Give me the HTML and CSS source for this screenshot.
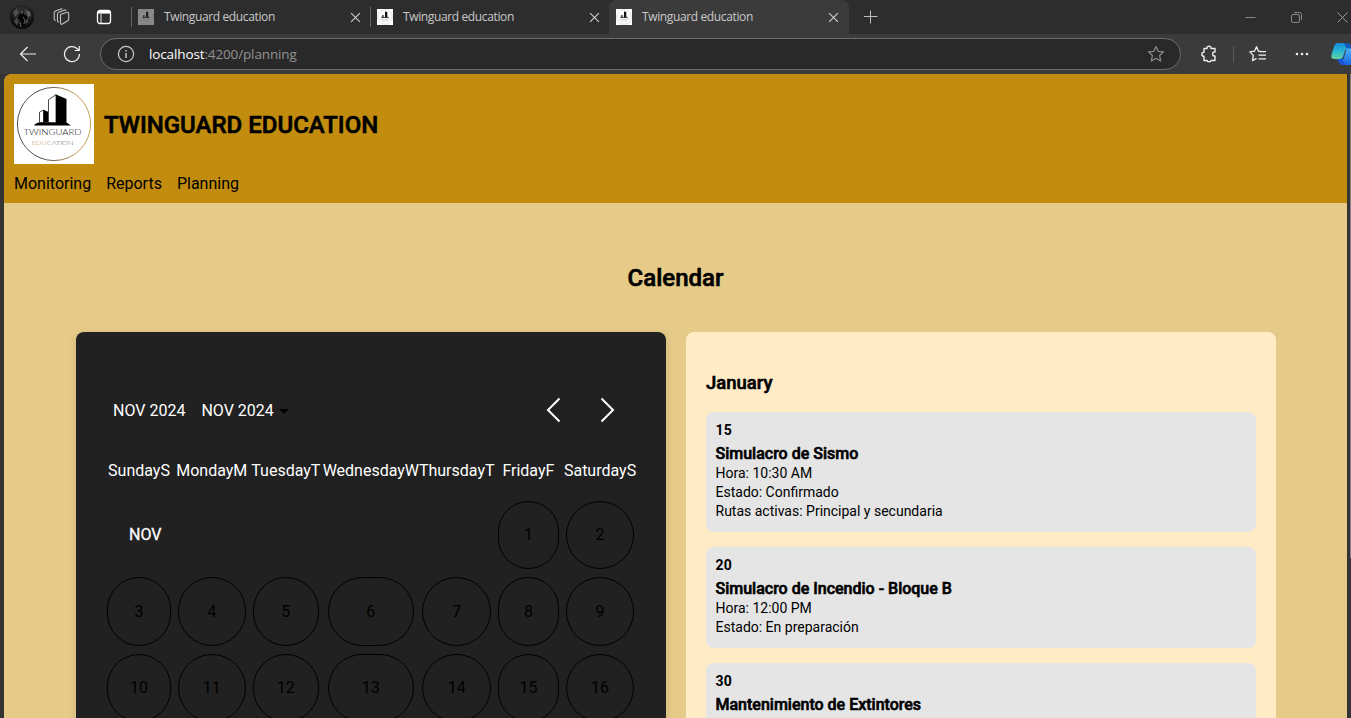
FILE: index.html
```html
<!DOCTYPE html>
<html lang="en">
<head>
<meta charset="utf-8">
<title>Twinguard education</title>
<link rel="stylesheet" href="styles.css">
</head>
<body>
<svg class="defs" width="0" height="0">
  <defs>
    <symbol id="favicon" viewBox="0 0 16 16">
      <rect width="16" height="16" fill="#fff"/>
      <circle cx="8" cy="8" r="7.3" fill="none" stroke="#ccc" stroke-width=".6"/>
      <path d="M4.200 8.400h7.600" stroke="#333" stroke-width=".9"/>
      <path d="M5.900 8.500V6M8.600 8.500V2.500M9.700 8.500V3" stroke="#111" stroke-width="1.200"/>
      <path d="M3 10.200h10M5 12h6" stroke="#bbb" stroke-width=".7"/>
    </symbol>
    <symbol id="close" viewBox="0 0 10 10"><path d="M1 1l8 8M9 1L1 9" fill="none" stroke="currentColor" stroke-width="1.1"/></symbol>
    <linearGradient id="gold" x1="0" x2="1"><stop offset=".35" stop-color="#222"/><stop offset=".8" stop-color="#b8862b"/></linearGradient>
    <linearGradient id="edu" x1="0" x2="1"><stop offset=".3" stop-color="#c49a4a"/><stop offset=".65" stop-color="#555"/></linearGradient>
    <linearGradient id="pilotA" x1="0" y1="0" x2="0" y2="1"><stop offset="0" stop-color="#1687d8"/><stop offset=".5" stop-color="#25b7d2"/><stop offset="1" stop-color="#64d39a"/></linearGradient>
    <linearGradient id="pilotB" x1="0" y1="0" x2="0" y2="1"><stop offset="0" stop-color="#4cb4fa"/><stop offset="1" stop-color="#1763e0"/></linearGradient>
    <radialGradient id="face" cx=".5" cy=".35" r=".6"><stop offset="0" stop-color="#444"/><stop offset="1" stop-color="#090909"/></radialGradient>
  </defs>
</svg>
<div class="window">
  <div class="tabstrip">
    <div class="tools">
      <svg width="24" height="24" viewBox="0 0 24 24"><circle cx="12" cy="12" r="12" fill="url(#face)"/><path d="M3 7l4-4 1 5-3 4zM4 16l3-3 1 4-1 4z" fill="#777" opacity=".5"/><path d="M16 5l4 2 1 4-3 1zM16 13l2 1-1 5-1-2z" fill="#999" opacity=".5"/><path d="M10.500 5l2-1 1.500 2-.5 3 3.500 2v4l-2 1-.5 5h-4l-.5-6-2-2 .5-3 2-1.500z" fill="#050505"/><path d="M11 6l1.500-.5.5 1.500-1 1.500zM13 12l2 3-1 4M10 17l1 5" stroke="#888" stroke-width=".7" fill="none"/></svg>
      <svg class="workspaces" width="18" height="18" viewBox="0 0 18 18" fill="none" stroke="#c4c4c4" stroke-width="1.100" stroke-linejoin="round"><path d="M7.500 6.500L14 4.300q1.500-.4 1.700 1v6q0 1-1 1.500L9 16.200q-1.500.4-1.500-1z"/><path d="M13 2.800q-.4-1-1.500-.7L6 4.200Q4.500 4.800 4.500 6v7q0 1 1.500 1.200M9.500 1.200q-.5-.5-1.500-.2L2.500 3Q1.200 3.700 1.200 5v6q0 1.400 1.500 1.500"/></svg>
      <svg class="tabmenu" width="16" height="16" viewBox="0 0 16 16" fill="none" stroke="#fff" stroke-width="1.300"><rect x="1.500" y="1.500" width="13" height="13" rx="2.500"/><path d="M1.500 3.300h13" stroke-width="2.600"/><path d="M5 5v9.500" stroke-width=".9"/></svg>
    </div>
    <div class="tab tab-muted"><svg class="fav" width="16" height="16"><use href="#favicon"/></svg><span>Twinguard education</span><svg class="x" width="11" height="11"><use href="#close"/></svg></div>
    <div class="tab"><svg class="fav" width="16" height="16"><use href="#favicon"/></svg><span>Twinguard education</span><svg class="x" width="11" height="11"><use href="#close"/></svg></div>
    <div class="tab tab-active"><svg class="fav" width="16" height="16"><use href="#favicon"/></svg><span>Twinguard education</span><svg class="x" width="11" height="11"><use href="#close"/></svg></div>
    <svg class="plus" width="14" height="14" viewBox="0 0 14 14"><path d="M6.500 .5v13M0 6.500h13.500" stroke="#c0c0c0"/></svg>
    <div class="winbtns">
      <svg width="11" height="11" viewBox="0 0 11 11"><path d="M.5 5.500h10" stroke="#888"/></svg>
      <svg width="11" height="11" viewBox="0 0 11 11" fill="none" stroke="#888"><rect x=".5" y="2.500" width="8" height="8" rx="1.500"/><path d="M3 .5h5.500q2 0 2 2V8"/></svg>
      <svg width="11" height="11" viewBox="0 0 11 11"><path d="M.5.500l10 10M10.500.500l-10 10" stroke="#999"/></svg>
    </div>
  </div>
  <div class="toolbar">
    <svg class="back" width="18" height="16" viewBox="0 0 18 16" fill="none" stroke="#eee" stroke-width="1.200"><path d="M8.500 1L1.500 8l7 7M1.500 8H17"/></svg>
    <svg class="reload" width="18" height="18" viewBox="0 0 18 18" fill="none" stroke="#eee" stroke-width="1.200"><path d="M16.500 9A7.500 7.500 0 1 1 14 3.500L16 5.300M16.300 1v4.500h-4.500"/></svg>
    <div class="address">
      <svg width="18" height="18" viewBox="0 0 18 18" fill="none" stroke="#ccc" stroke-width="1.200"><circle cx="9" cy="9" r="7.600"/><path d="M9 8v5M9 5v1.500" stroke-width="1.400"/></svg>
      <span class="url"><b>localhost</b>:4200/planning</span>
      <svg class="star" width="18" height="18" viewBox="0 0 18 18" fill="none" stroke="#8c8c8c" stroke-width="1.200" stroke-linejoin="round"><path d="M9 1.500l2.200 4.800 5.300.6-3.900 3.600 1.100 5.500L9 13.300 4.300 16l1.100-5.500L1.500 6.900l5.300-.6z"/></svg>
    </div>
    <svg class="ext" width="16" height="18" viewBox="0 0 16 18" fill="none" stroke="#eee" stroke-width="1.400" stroke-linejoin="round"><path d="M3 3.500h3q-.2-2.300 2-2.300t2 2.300h4V7q-2.400-.2-2.400 2T14 11v4.500h-4q0 1.300-2 1.300t-2-1.300H3V11.300Q.8 11.300.8 9.200T3 7.200z"/></svg>
    <i class="sep"></i>
    <svg class="favs" width="18" height="18" viewBox="0 0 18 18" fill="none" stroke="#eee" stroke-width="1.300" stroke-linejoin="round"><path d="M11.500 6.500l-2.200-.4L7.500 1.700 5.500 6.200l-4.700.7 3.500 3.500-.8 5.300 4-2.300M11 6.600h6M9.500 10.200H17M9.500 13.800H17"/></svg>
    <svg class="more" width="14" height="4" viewBox="0 0 14 4" fill="#eee"><circle cx="2" cy="2" r="1.300"/><circle cx="7" cy="2" r="1.300"/><circle cx="12" cy="2" r="1.300"/></svg>
    <svg class="copilot" width="20" height="24" viewBox="0 0 20 24"><path d="M7 1h10q2 0 2.500 2l1 4h-4q-2 0-2.500 2l-2 6q-.5 2-2.500 2H3Q-.5 17 .5 12.500l2.500-8Q4 1 7 1z" fill="url(#pilotA)"/><path d="M13 1h4q2 0 2.500 2l1 4h-4.500q-1.500-3-3-6z" fill="#1458b8"/><path d="M6 17h3q2 0 2.500-2l2-7q.5-1.500 2.500-1.500h4V23h-8q-2 0-3-1.500z" fill="url(#pilotB)"/><path d="M6 17h3q1.500 0 2.200-1l2.800 7h-2q-2.500 0-3.200-2z" fill="#1a54d6"/><path d="M14.200 8l-2 7q-.5 1.500-1.500 2l2-.3 2.800-9.700z" fill="#3b3b3b"/></svg>
  </div>
  <div class="viewport">
    <div class="page">
      <header class="header">
        <div class="brand">
          <svg width="80" height="80" viewBox="0 0 80 80"><rect width="80" height="80" fill="#fff"/><circle cx="40" cy="40" r="36.600" fill="none" stroke="url(#gold)" stroke-width=".8"/>
            <path d="M41.500 10.200l11 4.800v23.500l4.500 3H20q1.500-2.500 6-3.200h15.500z" fill="#000"/><path d="M34.500 38.500V15.700l7.500-5v28z" fill="#fff" stroke="#000" stroke-width=".7"/><path d="M25.500 38.500V28.200l4-2.200v12.500z" fill="#fff" stroke="#000" stroke-width=".7"/><path d="M29.500 25.700l4.500 2v10.800h-4.500z"/>
            <text class="logo-name" x="9.500" y="50.600" textLength="58" lengthAdjust="spacingAndGlyphs">TWINGUARD</text><text class="logo-sub" x="17.500" y="60.700" textLength="42" lengthAdjust="spacingAndGlyphs" fill="url(#edu)">EDUCATION</text></svg>
          <h1>TWINGUARD EDUCATION</h1>
        </div>
        <nav><a>Monitoring</a><a>Reports</a><a>Planning</a></nav>
      </header>
      <main>
        <h2>Calendar</h2>
        <div class="columns">
          <section class="calendar">
            <div class="controls">
              <span>NOV 2024</span><span>NOV 2024</span><i class="caret"></i>
              <svg class="prev" width="16" height="26" viewBox="0 0 16 26" fill="none" stroke="#fff" stroke-width="2"><path d="M14.500 1.500L3 13l11.500 11.500"/></svg>
              <svg width="16" height="26" viewBox="0 0 16 26" fill="none" stroke="#fff" stroke-width="2"><path d="M1.500 1.500L13 13 1.500 24.500"/></svg>
            </div>
            <div class="week names"><span>SundayS</span><span>MondayM</span><span>TuesdayT</span><span>WednesdayW</span><span>ThursdayT</span><span>FridayF</span><span>SaturdayS</span></div>
            <div class="week"><span class="month">NOV</span><span class="day">1</span><span class="day">2</span></div>
            <div class="week"><span class="day">3</span><span class="day">4</span><span class="day">5</span><span class="day wide">6</span><span class="day">7</span><span class="day">8</span><span class="day">9</span></div>
            <div class="week"><span class="day">10</span><span class="day">11</span><span class="day">12</span><span class="day wide">13</span><span class="day">14</span><span class="day">15</span><span class="day">16</span></div>
          </section>
          <section class="events">
            <h3>January</h3>
            <article><strong>15</strong><h4>Simulacro de Sismo</h4><p>Hora: 10:30 AM</p><p>Estado: Confirmado</p><p>Rutas activas: Principal y secundaria</p></article>
            <article><strong>20</strong><h4>Simulacro de Incendio - Bloque B</h4><p>Hora: 12:00 PM</p><p>Estado: En preparación</p></article>
            <article><strong>30</strong><h4>Mantenimiento de Extintores</h4></article>
          </section>
        </div>
      </main>
    </div>
    <div class="scrollbar"></div>
  </div>
</div>
</body>
</html>
```
FILE: styles.css
```css
* { box-sizing: border-box; }
body { margin: 0; font-family: Roboto, sans-serif; color: #000; overflow: hidden; }
svg { display: block; flex: none; }
.defs { position: absolute; }
h1, h2, h3, h4, p { margin: 0; }
.window { width: 1351px; height: 718px; display: flex; flex-direction: column; background: #3b3b3b; overflow: hidden; }

.tabstrip { height: 34px; flex: none; display: flex; align-items: center; background: #2d2d2d; color: #c9c9c9; font-family: "Open Sans", sans-serif; font-size: 12px; }
.tools { width: 131px; padding-left: 10px; display: flex; align-items: center; }
.workspaces { margin-left: 19px; }
.tabmenu { margin-left: 25px; }
.tab { width: 239px; height: 34px; padding-left: 7px; display: flex; align-items: center; background: linear-gradient(#656565, #656565) 0 7px / 1px 20px no-repeat; }
.tab span { margin-left: 10px; padding-bottom: 1px; width: 186px; letter-spacing: -.37px; white-space: nowrap; }
.tab-muted .fav { opacity: .45; }
.tab-active { width: 240px; background: #3b3b3b; border-radius: 8px 8px 0 0; }
.plus { margin-left: 15px; }
.winbtns { margin-left: auto; margin-right: 3px; display: flex; gap: 35px; }

.toolbar { height: 40px; flex: none; display: flex; align-items: center; background: #3b3b3b; }
.back { margin-left: 19px; }
.reload { margin-left: 26px; }
.address { width: 1081px; height: 32px; margin-left: 19px; padding: 0 15px 0 16px; display: flex; align-items: center; border: 1px solid #6b6b6b; border-radius: 16px; background: #292929; }
.url { margin-left: 14px; font: 13.500px "Open Sans", sans-serif; color: #929292; letter-spacing: -.13px; }
.url b { color: #fff; font-weight: 400; }
.star { margin-left: auto; }
.ext { margin-left: 20px; }
.sep { width: 1px; height: 17px; margin-left: 16px; background: #5b5b5b; }
.favs { margin-left: 15px; }
.more { margin-left: 28px; }
.copilot { margin-left: 22px; }

.viewport { flex: 1; min-height: 0; display: flex; padding-left: 4px; background: #343434; }
.page { width: 1343px; overflow: hidden; border-radius: 8px 0 0 0; background: #e5ca88; }
.scrollbar { width: 1px; height: 484px; margin-left: 3px; background: #858585; }

.header { height: 129px; padding: 10px; background: #c28c0e; }
.brand { display: flex; align-items: center; gap: 10px; }
.logo-name { font: 300 7.300px Lato, sans-serif; fill: #222; }
.logo-sub { font: 300 6.300px Lato, sans-serif; }
h1, h2, h3, h4 { font-weight: 500; -webkit-text-stroke: .6px #000; }
h1 { font-size: 24px; line-height: 28px; padding-top: 1px; }
nav { display: flex; gap: 15px; margin-top: 10px; font-size: 16px; line-height: 19px; }

h2 { margin-top: 61px; text-align: center; font-size: 24px; line-height: 28px; }
.columns { display: flex; gap: 20px; margin: 40px 71px 0 72px; height: 460px; }
.calendar, .events { width: 590px; border-radius: 8px; }
.calendar { padding: 64px 28px 0 27.500px; background: #212121; color: #fff; box-shadow: 0 2px 8px rgba(0, 0, 0, .1); }
.controls { height: 28px; display: flex; align-items: center; padding: 0 22px 0 9.500px; font-size: 16px; }
.controls span + span { margin-left: 16px; }
.caret { margin-left: 5px; margin-top: 2px; border: 5px solid transparent; border-top-color: #000; border-bottom: 0; }
.prev { margin-left: auto; margin-right: 39px; }
.week { display: grid; grid-template-columns: 71px 74.500px 73.700px 96.300px 75.500px 67.800px 75.500px; height: 76.500px; font-size: 16px; }
.names { height: 73px; padding-top: 37px; justify-items: center; line-height: 19px; white-space: nowrap; }
.month { grid-column: 1 / 6; padding: 28px 0 0 25.500px; line-height: 20px; -webkit-text-stroke: .3px #fff; }
.day { margin: 3.500px 3.500px 4.500px; display: flex; align-items: center; justify-content: center; border: 1px solid #000; border-radius: 999px; color: #000; }
.wide { margin-left: 5px; margin-right: 5px; }

.events { padding: 40px 20px 0; background: #ffebc6; font-size: 14px; }
h3 { font-size: 18.500px; line-height: 22px; margin-bottom: 18px; }
article { padding: 10px 10px 11px 9.500px; margin-bottom: 15px; border-radius: 8px; background: #e5e5e5; }
article strong { display: block; line-height: 17px; font-weight: 700; margin-bottom: 5px; letter-spacing: .15px; }
h4 { font-size: 16px; line-height: 20px; }
article p { line-height: 19px; }
```
